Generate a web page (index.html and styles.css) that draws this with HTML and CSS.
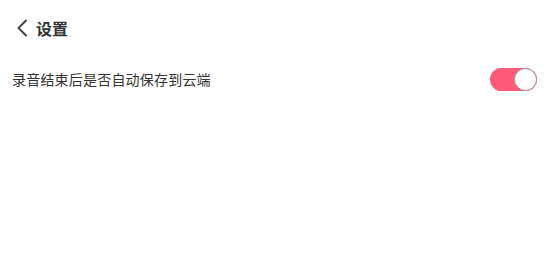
FILE: index.html
```html
<!DOCTYPE html>
<html lang="zh-CN">
<head>
    <meta charset="UTF-8">
    <meta name="viewport" content="width=device-width, initial-scale=1.0">
    <title>设置</title>
    <link rel="stylesheet" href="styles.css">
</head>
<body>
    <div class="header">
        <svg class="back" width="12" height="18" viewBox="0 0 12 18">
            <path d="M10 1.5 L2.5 9 L10 16.5" fill="none" stroke="#444" stroke-width="2" stroke-linecap="round" stroke-linejoin="round"/>
        </svg>
        <span class="title">设置</span>
    </div>
    <div class="row">
        <span class="label">录音结束后是否自动保存到云端</span>
        <div class="switch on"><div class="knob"></div></div>
    </div>
</body>
</html>
```

FILE: styles.css
```css
body {
    margin: 0;
    font-family: "Noto Sans CJK SC", "Noto Sans", sans-serif;
    background-color: #fff;
    color: #333;
}
.header {
    height: 56px;
    display: flex;
    align-items: center;
    padding-left: 16px;
}
.back {
    margin-right: 8px;
}
.title {
    font-size: 16px;
    font-weight: bold;
    color: #333;
}
.row {
    display: flex;
    align-items: center;
    justify-content: space-between;
    padding: 0 10px 0 12px;
    height: 46px;
}
.label {
    font-size: 14px;
    letter-spacing: 0.2px;
    color: #333;
}
.switch {
    width: 47px;
    height: 23px;
    border-radius: 12px;
    background-color: #ff5a78;
    display: flex;
    justify-content: flex-end;
    box-sizing: border-box;
}
.knob {
    width: 23px;
    height: 23px;
    border-radius: 50%;
    background-color: #fff;
    border: 1px solid #999;
    box-sizing: border-box;
}
```
